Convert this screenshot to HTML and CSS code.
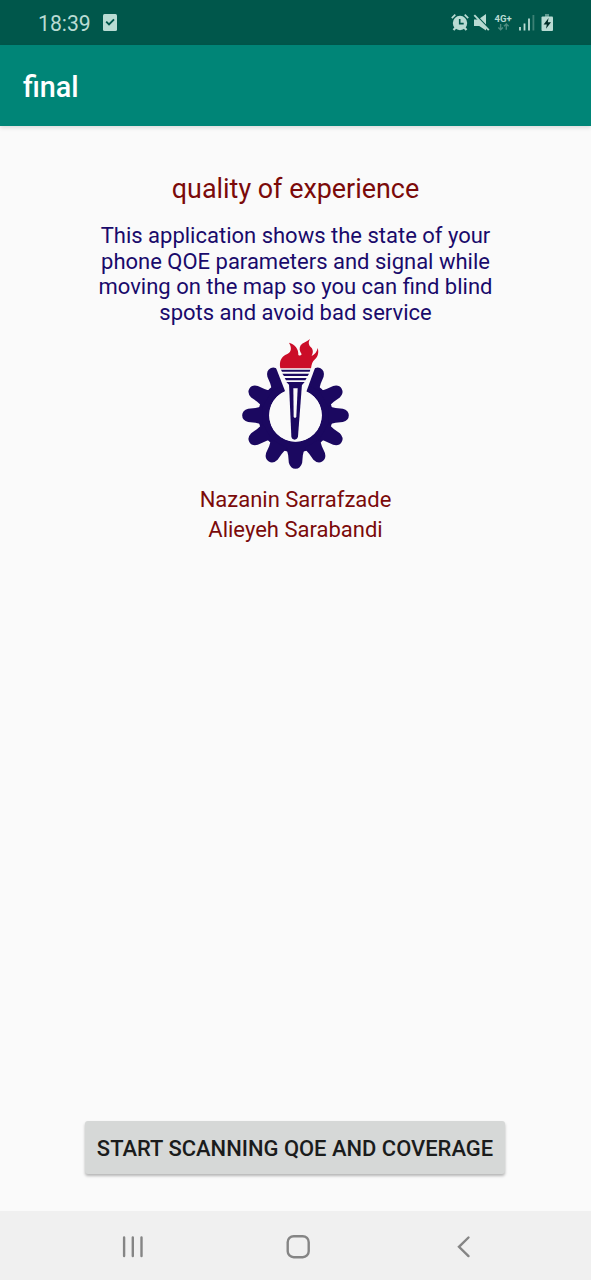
FILE: index.html
```html
<!DOCTYPE html>
<html lang="en">
<head>
<meta charset="utf-8">
<title>final</title>
<link rel="stylesheet" href="styles.css">
</head>
<body>
<div class="status">
  <span class="clock">18:39</span>
  <svg class="check" width="14" height="18" viewBox="0 0 14 18"><rect width="14" height="17" rx="1.5" fill="#b9dbd3"/><path d="M3.2 7.700l2.800 2.800 5-5.200" fill="none" stroke="#00574b" stroke-width="1.900"/></svg>
  <svg class="tray" width="110" height="24" viewBox="0 0 110 24">
    <circle cx="10" cy="12" r="7.200" fill="#b9dbd3"/>
    <path d="M9.700 8v4.600h4" fill="none" stroke="#00574b" stroke-width="1.600"/>
    <g fill="none" stroke="#b9dbd3">
      <path d="M1.800 7.200l3.500-3.500M14.700 3.700l3.500 3.500" stroke-width="1.700"/>
      <path d="M5.800 16.500l-2.300 2.600M14.200 16.500l2.300 2.600" stroke-width="2.200"/>
    </g>
    <path d="M24 8.500h4.500l7.500 8.200v2.800L29.200 15H24zM30 7.300L36 3v10.500z" fill="#b9dbd3"/>
    <path d="M24.300 4.100l14.500 15" stroke="#b9dbd3" stroke-width="1.900"/>
    <text class="net" x="44.500" y="11">4G+</text>
    <path d="M50.600 13v5.500M48.300 16.500l2.300 2.300 2.300-2.300M56.300 18.800v-5.500M54 15.300l2.300-2.300 2.300 2.300" fill="none" stroke="#4d8c81" stroke-width="1.400"/>
    <path d="M70 16v3.500M74.500 12.500v7M79 7.500v12" stroke="#b9dbd3" stroke-width="1.800"/>
    <path d="M83.400 4v15.500" stroke="#3c8175" stroke-width="1.800"/>
    <path d="M95 3h4v3h-4z" fill="#5c988e"/>
    <rect x="91.500" y="5.500" width="11.500" height="14.500" rx="1" fill="#b9dbd3"/>
    <path d="M98.600 7l-5 6.400h3.200l-.8 4.400 5-6.500h-3.200z" fill="#002d27"/>
  </svg>
</div>
<header class="appbar">final</header>
<main class="content">
  <h1 class="title">quality of experience</h1>
  <p class="intro">This application shows the state of your<br>phone QOE parameters and signal while<br>moving on the map so you can find blind<br>spots and avoid bad service</p>
  <svg class="logo" width="120" height="140" viewBox="0 0 360 420">
    <defs><path id="tooth" d="M-31-98Q-23-106-22-120L-20-142Q-15-160 0-160Q15-160 20-142L22-120Q23-106 31-98z"/></defs>
    <g fill="#1b0860" transform="translate(181.500 241)">
      <circle r="95" fill="none" stroke="#1b0860" stroke-width="33"/>
      <use href="#tooth" transform="rotate(-28)"/>
      <use href="#tooth" transform="rotate(28)"/>
      <use href="#tooth" transform="rotate(60)"/>
      <use href="#tooth" transform="rotate(90)"/>
      <use href="#tooth" transform="rotate(120)"/>
      <use href="#tooth" transform="rotate(150)"/>
      <use href="#tooth" transform="rotate(180)"/>
      <use href="#tooth" transform="rotate(210)"/>
      <use href="#tooth" transform="rotate(240)"/>
      <use href="#tooth" transform="rotate(270)"/>
      <use href="#tooth" transform="rotate(300)"/>
    </g>
    <circle cx="181.500" cy="241" r="79" fill="#fafafa"/>
    <path d="M122 96H241L214 170H151z" fill="#fafafa"/>
    <g fill="#1b0860">
      <path d="M138 104H226L224 110H141zM142 116H222L218 123H147zM149 129H215L211 136H153zM154 141H209L202 149H162z"/>
      <path d="M162 147H201L189 304Q187 314 179 314Q170 314 169 304z"/>
    </g>
    <path d="M175 160H188L184 245Q180 252 176 245z" fill="#fafafa"/>
    <path d="M136 100C132 80 138 67 152 59C167 54 173 42 162 23C180 28 191 42 190 60Q196 64 200 58C193 48 192 40 197 31C203 23 216 20 225 12C218 24 222 32 230 39C236 48 233 56 230 63C240 58 246 50 248 39C252 52 249 65 240 73C232 80 230 88 228 100z" fill="#cb0d28"/>
  </svg>
  <p class="authors">Nazanin Sarrafzade<br>Alieyeh Sarabandi</p>
  <button class="start">START SCANNING QOE AND COVERAGE</button>
</main>
<nav class="navbar">
  <svg width="591" height="69" viewBox="0 0 591 69" fill="none" stroke="#858585" stroke-width="2.400" stroke-linecap="round" stroke-linejoin="round">
    <path d="M124.100 26.500v18.500M132.800 26.500v18.500M141.500 26.500v18.500"/>
    <rect x="287.700" y="25.200" width="21" height="21" rx="6"/>
    <path d="M468.500 26.500l-9.500 9.300 9.500 9.300" stroke-linejoin="miter"/>
  </svg>
</nav>
</body>
</html>
```
FILE: styles.css
```css
* { box-sizing: border-box; }
body {
  margin: 0;
  width: 591px;
  height: 1280px;
  display: flex;
  flex-direction: column;
  background: #fafafa;
  font-family: Roboto, sans-serif;
  overflow: hidden;
}
.status {
  height: 45px;
  display: flex;
  align-items: center;
  padding: 0 31px 0 38px;
  background: #00574b;
  color: #b9dbd3;
}
.clock { font-size: 21.2px; line-height: 45px; padding-top: 2px; width: 65px; }
.tray { margin-left: auto; }
.net { font: bold 9.5px Roboto, sans-serif; fill: #b9dbd3; }
.appbar {
  height: 81px;
  padding: 2px 23px 0;
  background: #008577;
  color: #fff;
  font-size: 28.75px;
  font-weight: 500;
  line-height: 81px;
  box-shadow: 0 2px 4px rgba(0, 0, 0, .12);
}
.content {
  flex: 1;
  display: flex;
  flex-direction: column;
  align-items: center;
  padding-right: 1px;
  text-align: center;
}
.title {
  margin: 47px 0 0 1px;
  font-size: 26.9px;
  font-weight: 400;
  line-height: 32px;
  color: #7b0a0a;
}
.intro {
  margin: 18px 0 0 1px;
  font-size: 22px;
  line-height: 25.7px;
  color: #190a6b;
}
.logo { margin-top: 9px; }
.authors {
  margin: 10px 0 0 1px;
  font-size: 22px;
  line-height: 30px;
  color: #7b0a0a;
}
.start {
  width: 420px;
  height: 53px;
  margin: auto 0 37px;
  padding: 2px 0 0;
  border: 0;
  border-radius: 3px;
  background: #d6d8d7;
  box-shadow: 0 2px 3px rgba(0, 0, 0, .28);
  font: 500 21.95px Roboto, sans-serif;
  white-space: nowrap;
  color: #1b1c1c;
}
.navbar { height: 69px; background: #f0f0f0; }
.navbar svg { display: block; }
```
